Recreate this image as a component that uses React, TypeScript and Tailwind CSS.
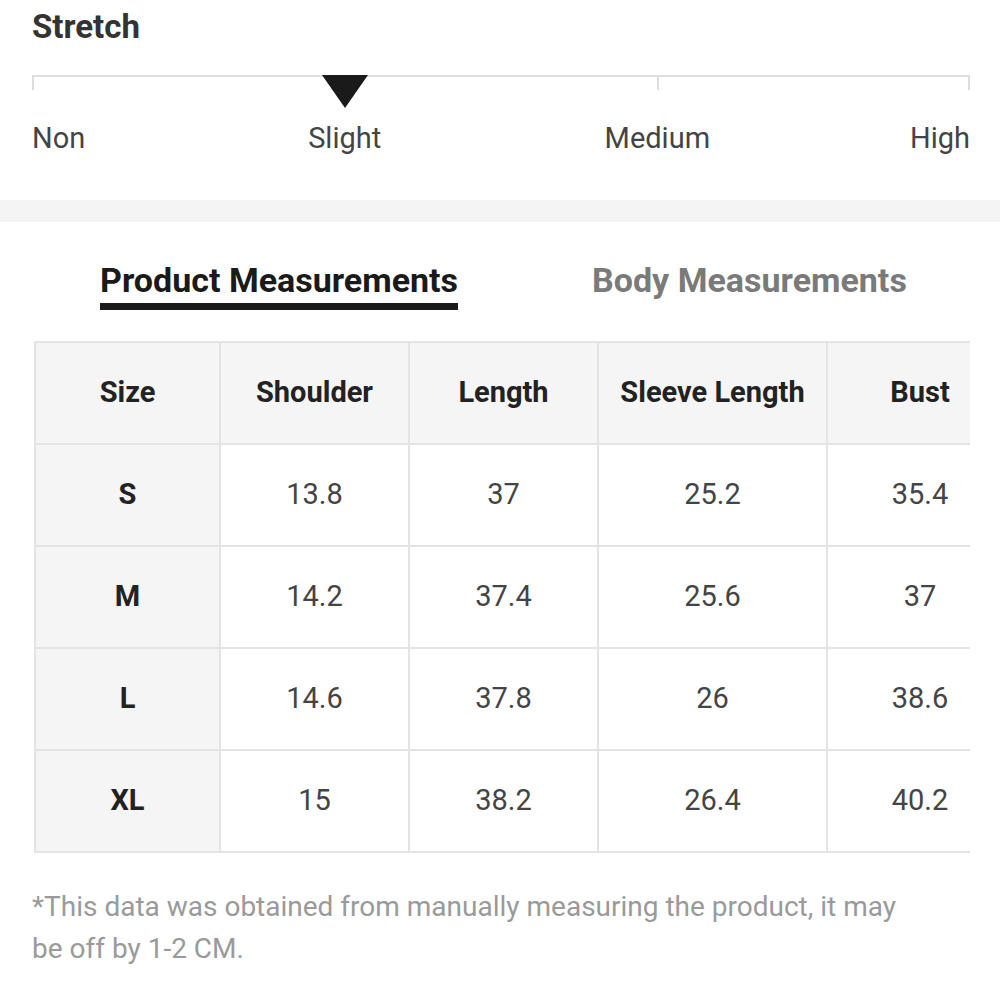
import React from 'react'

const headers = ['Size', 'Shoulder', 'Length', 'Sleeve Length', 'Bust']
const widths = ['w-[185px]', 'w-[189px]', 'w-[189px]', 'w-[229px]', 'w-[186px]']

const rows = [
  ['S', '13.8', '37', '25.2', '35.4'],
  ['M', '14.2', '37.4', '25.6', '37'],
  ['L', '14.6', '37.8', '26', '38.6'],
  ['XL', '15', '38.2', '26.4', '40.2'],
]

export default function App() {
  return (
    <div className="w-[1000px] h-[1000px] bg-white overflow-hidden" style={{ fontFamily: 'Roboto, "Liberation Sans", sans-serif' }}>
      {/* Stretch */}
      <div className="px-8 pt-[8px]">
        <h2 className="text-[33px] leading-[38px] font-bold text-[#333]">Stretch</h2>

        <div className="relative mt-[29px] w-[938px]">
          <div className="grid grid-cols-3 h-[15px]">
            <div className="border-t-2 border-l-2 border-[#dedede]" />
            <div className="border-t-2 border-[#dedede]" />
            <div className="border-t-2 border-l-2 border-r-2 border-[#dedede]" />
          </div>
          <div className="absolute left-[290px] top-0 w-0 h-0 border-l-[23px] border-r-[23px] border-t-[33px] border-l-transparent border-r-transparent border-t-[#1a1a1a]" />
        </div>

        <div className="grid grid-cols-6 w-[938px] mt-[32px] text-[29px] leading-[32px] text-[#444]">
          <div className="text-left">Non</div>
          <div className="col-span-2 text-center">Slight</div>
          <div className="col-span-2 text-center">Medium</div>
          <div className="text-right">High</div>
        </div>
      </div>

      <div className="mt-[46px] h-[22px] bg-[#f4f4f4]" />

      {/* Tabs */}
      <div className="flex mt-[38px] pl-[100px] gap-[134px] text-[34px] leading-[40px] font-bold">
        <div className="flex flex-col">
          <span className="text-[#1a1a1a]">Product Measurements</span>
          <div className="mt-[3px] h-[7px] bg-[#1a1a1a]" />
        </div>
        <span className="text-[#7a7a7a]">Body Measurements</span>
      </div>

      {/* Table */}
      <div className="ml-[34px] mt-[31px] w-[936px] overflow-hidden">
        <div className="flex w-max border-t-2 border-l-2 border-[#e4e4e4]">
          {headers.map((h, i) => (
            <div
              key={h}
              className={`${widths[i]} h-[102px] flex items-center justify-center border-r-2 border-b-2 border-[#e4e4e4] bg-[#f5f5f5] text-[29px] font-bold text-[#222]`}
            >
              {h}
            </div>
          ))}
        </div>
        {rows.map((r) => (
          <div key={r[0]} className="flex w-max border-l-2 border-[#e4e4e4]">
            {r.map((c, i) => (
              <div
                key={i}
                className={`${widths[i]} h-[102px] flex items-center justify-center border-r-2 border-b-2 border-[#e4e4e4] text-[29px] ${
                  i === 0 ? 'bg-[#f5f5f5] font-bold text-[#222]' : 'bg-white text-[#444]'
                }`}
              >
                {c}
              </div>
            ))}
          </div>
        ))}
      </div>

      {/* Footnote */}
      <p className="px-8 mt-[33px] text-[28px] leading-[42px] text-[#9a9a9a]">
        *This data was obtained from manually measuring the product, it may
        <br />
        be off by 1-2 CM.
      </p>
    </div>
  )
}
